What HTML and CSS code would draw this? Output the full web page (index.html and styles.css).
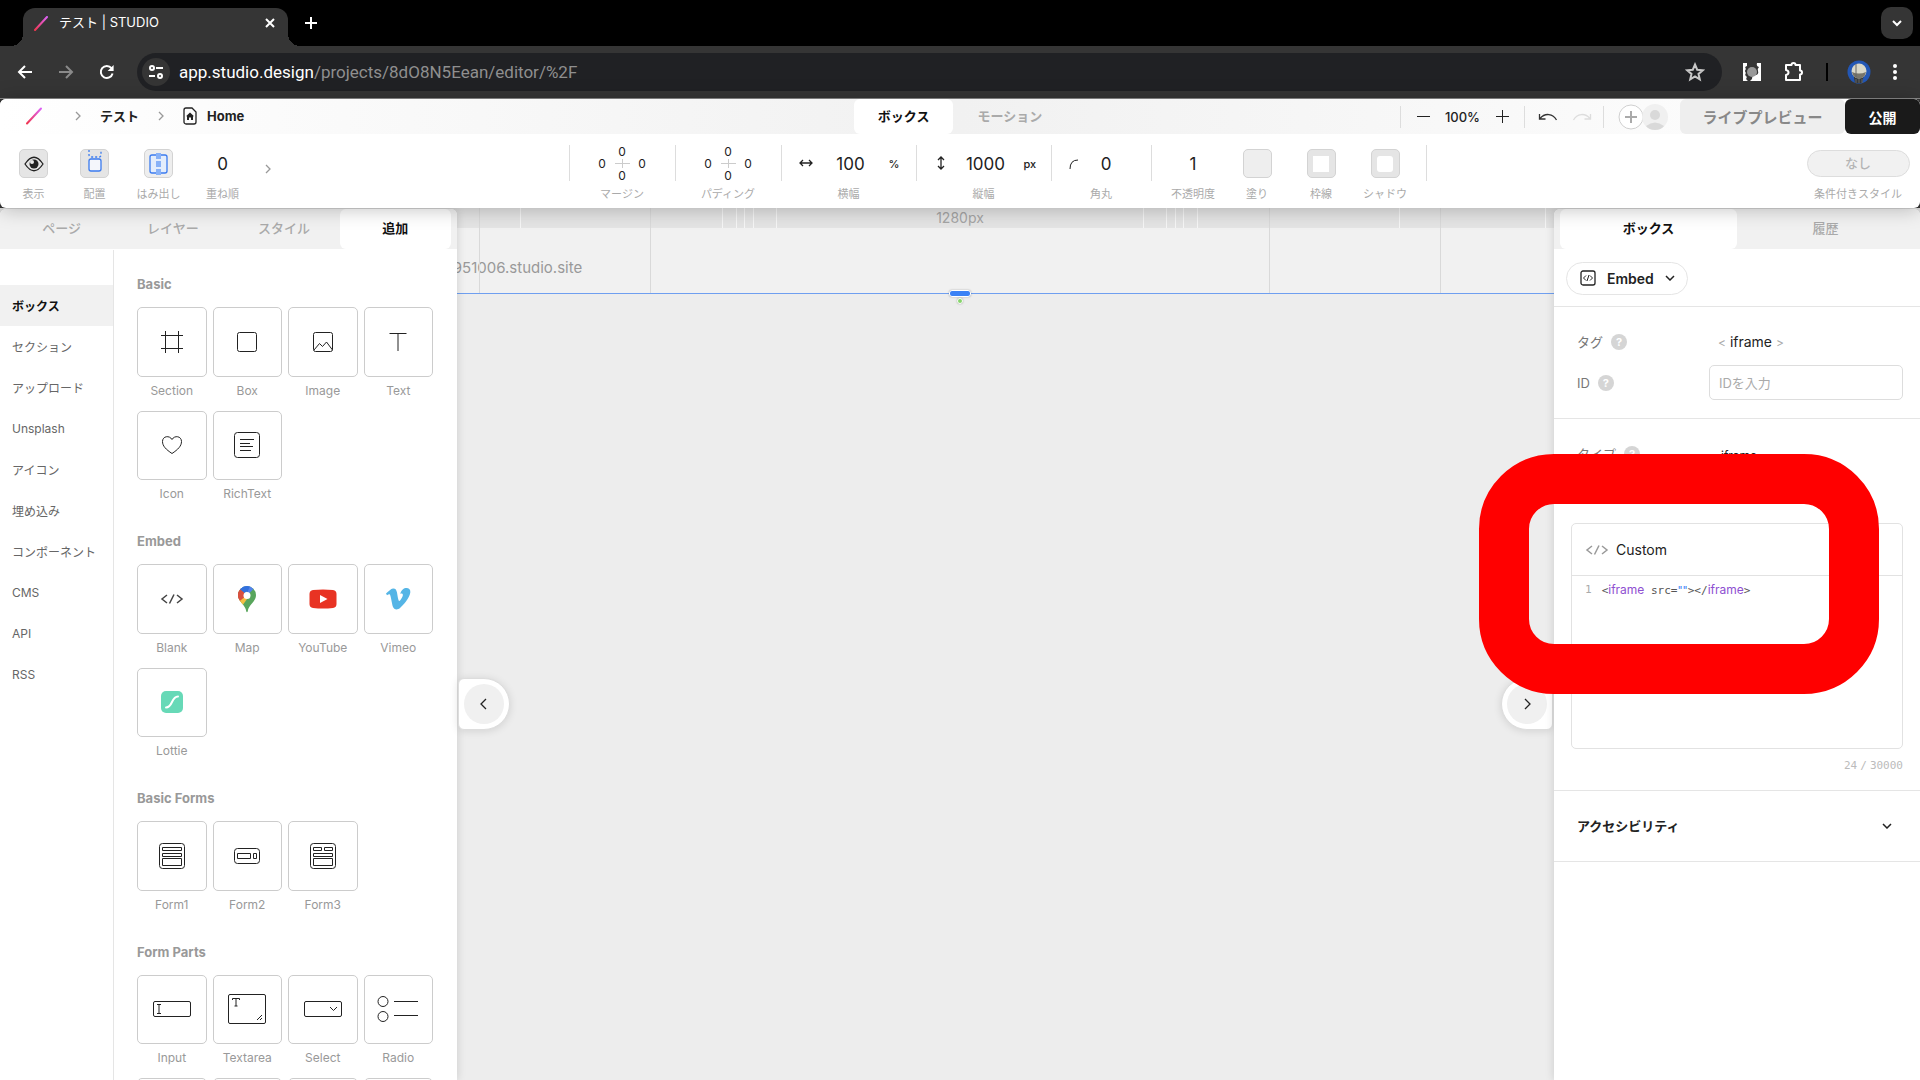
FILE: index.html
```html
<!DOCTYPE html>
<html lang="ja">

<head>
    <meta charset="UTF-8">
    <meta name="viewport" content="width=device-width, initial-scale=1.0">
    <title>テスト | STUDIO</title>
    <link rel="stylesheet" href="styles.css">
</head>

<body>
    <!-- browser -->
    <div class="tab-bar">
        <div class="browser-tab">
            <svg width="16" height="16" viewBox="0 0 16 16"><path d="M2 15 14 2" stroke="url(#slash)" stroke-width="2" stroke-linecap="round"/></svg>
            <span class="browser-title">テスト | STUDIO</span>
            <button class="chrome-btn" aria-label="閉じる"><svg width="12" height="12" viewBox="0 0 12 12"><path d="M2 2l8 8M10 2l-8 8" stroke="#fff" stroke-width="2"/></svg></button>
        </div>
        <button class="chrome-btn" aria-label="新しいタブ"><svg width="14" height="14" viewBox="0 0 14 14"><path d="M7 1v12M1 7h12" stroke="#fff" stroke-width="2"/></svg></button>
        <button class="tab-search" aria-label="タブを検索"><svg width="12" height="12" viewBox="0 0 12 12"><path d="M2 4l4 4 4-4" fill="none" stroke="#fff" stroke-width="2"/></svg></button>
    </div>
    <div class="address-row">
        <button class="chrome-btn" aria-label="戻る"><svg width="16" height="16" viewBox="0 0 16 16"><path d="M15 8H2M8 2 2 8l6 6" fill="none" stroke="#fff" stroke-width="2"/></svg></button>
        <button class="chrome-btn" aria-label="進む"><svg width="16" height="16" viewBox="0 0 16 16"><path d="M1 8h13M8 2l6 6-6 6" fill="none" stroke="#8a8a8a" stroke-width="2"/></svg></button>
        <button class="chrome-btn" aria-label="再読み込み"><svg width="16" height="16" viewBox="0 0 16 16"><path d="M13.600 9.500A6 6 0 1 1 12.500 4.200" fill="none" stroke="#fff" stroke-width="2"/><path d="M14.600 1v6h-6z" fill="#fff"/></svg></button>
        <div class="address">
            <button class="site-info" aria-label="サイト情報"><svg width="16" height="16" viewBox="0 0 16 16" fill="none" stroke="#fff" stroke-width="2"><circle cx="4" cy="4" r="2"/><path d="M8 4h7M1 12h6"/><circle cx="12" cy="12" r="2"/></svg></button>
            <span class="url"><span class="host">app.studio.design</span>/projects/8dO8N5Eean/editor/%2F</span>
            <button class="chrome-btn" aria-label="ブックマーク"><svg width="20" height="20" viewBox="0 0 20 20"><path d="M10 2.500l2.200 5.200 5.600.5-4.300 3.700 1.300 5.500L10 14.500l-4.800 2.900 1.300-5.500L2.200 8.200l5.600-.5z" fill="none" stroke="#c7c7c7" stroke-width="2"/></svg></button>
        </div>
        <div class="extensions">
            <button class="chrome-btn" aria-label="拡張機能"><svg width="20" height="20" viewBox="0 0 20 20"><path d="M1 1h18v18H1z" fill="#fff"/><path d="M5 1h10q-1 3 2 4-2 2-1 4 1 3-2 4-4 0-4 4l-2 2H6q-3-2-1-4-3-2-1-4-2-2 0-4-2-2 1-3z" fill="#353535"/><circle cx="10" cy="10" r="5" fill="#999"/></svg></button>
            <button class="chrome-btn" aria-label="拡張機能の管理"><svg width="20" height="20" viewBox="0 0 20 20"><path d="M2 3h5.500a2 2 0 0 1 4 0H16v5.500a2 2 0 0 1 0 4V18H2v-5q2.500-.5 2.500-2.500T2 8z" fill="none" stroke="#fff" stroke-width="2" stroke-linejoin="round"/></svg></button>
            <span class="chrome-line"></span>
            <button class="chrome-btn" aria-label="プロフィール"><svg width="24" height="24" viewBox="0 0 24 24"><circle cx="12" cy="12" r="11.500" fill="#2357b5"/><path d="M7 14h10l-1 5-1 4H8l-1-5z" fill="#363a3b"/><circle cx="12" cy="11" r="7.500" fill="#d9d8ca"/><path d="M5 12q7 3 14 0-1 6-7 6.500-6-.5-7-6.500z" fill="#77756b"/><path d="M9 4v13M9 19v4M12 19v4M15 19v4" stroke="#666" stroke-width="1"/></svg></button>
            <button class="chrome-btn" aria-label="メニュー"><svg width="4" height="16" viewBox="0 0 4 16" fill="#fff"><circle cx="2" cy="2" r="2"/><circle cx="2" cy="8" r="2"/><circle cx="2" cy="14" r="2"/></svg></button>
        </div>
    </div>

    <!-- header -->
    <header class="header">
        <div class="header-top">
            <nav class="crumbs">
                <a class="logo" href="#" aria-label="STUDIO"><svg width="18" height="18" viewBox="0 0 18 18"><defs><linearGradient id="slash" x1="0" y1="1" x2="1" y2="0"><stop offset="0" stop-color="#f0364f"/><stop offset="1" stop-color="#dc62f5"/></linearGradient></defs><path d="M2 16.500 16 1.500" stroke="url(#slash)" stroke-width="2" stroke-linecap="round"/></svg></a>
                <svg width="6" height="10" viewBox="0 0 6 10"><path d="M1 1l4 4-4 4" fill="none" stroke="#999" stroke-width="1.300"/></svg>
                <a href="#">テスト</a>
                <svg width="6" height="10" viewBox="0 0 6 10"><path d="M1 1l4 4-4 4" fill="none" stroke="#999" stroke-width="1.300"/></svg>
                <a class="crumb-page" href="#"><svg width="14" height="18" viewBox="0 0 14 18"><path d="M3 1h6l4 4v10a2 2 0 0 1-2 2H3a2 2 0 0 1-2-2V3a2 2 0 0 1 2-2z" fill="none" stroke="#222" stroke-width="1.300"/><path d="M7 5.500l4 3.800h-1V13H8v-2.500H6V13H4V9.300H3z" fill="#222"/></svg>Home</a>
            </nav>
            <div class="mode-tabs">
                <button class="mode-tab active">ボックス</button>
                <button class="mode-tab">モーション</button>
            </div>
            <div class="header-actions">
                <div class="action-group">
                    <button aria-label="縮小"><svg width="14" height="14" viewBox="0 0 14 14"><path d="M1 6.500h13" stroke="#222"/></svg></button>
                    <span class="zoom">100%</span>
                    <button aria-label="拡大"><svg width="14" height="14" viewBox="0 0 14 14"><path d="M1 6.500h13M7.500 0v13" stroke="#222"/></svg></button>
                </div>
                <div class="action-group">
                    <button aria-label="元に戻す"><svg width="20" height="10" viewBox="0 0 20 10"><path d="M18.500 8C15 1.500 7 .5 2 6.500M1.500 2v5h6" fill="none" stroke="#333" stroke-width="1.300"/></svg></button>
                    <button aria-label="やり直す"><svg width="20" height="10" viewBox="0 0 20 10"><path d="M1.500 8C5 1.500 13 .5 18 6.500M18.500 2v5h-6" fill="none" stroke="#ddd" stroke-width="1.300"/></svg></button>
                </div>
                <div class="action-group members">
                    <button aria-label="メンバーを招待"><svg width="26" height="26" viewBox="0 0 26 26"><circle cx="13" cy="13" r="12" fill="#fff" stroke="#d0d0d0"/><path d="M13 7v12M7 13h12" stroke="#aaa" stroke-width="2"/></svg></button>
                    <button aria-label="アカウント"><svg width="26" height="26" viewBox="0 0 26 26"><circle cx="13" cy="13" r="13" fill="#f0f0f0"/><circle cx="13" cy="11" r="5" fill="#d9d9d9"/><path d="M4 22q9-7 18 0-3 4-9 4t-9-4z" fill="#d9d9d9"/></svg></button>
                </div>
                <button class="preview">ライブプレビュー</button>
                <button class="publish">公開</button>
            </div>
        </div>

        <div class="style-bar">
            <div class="style-left">
                <div class="prop"><button class="tile" id="show"><svg width="22" height="16" viewBox="0 0 22 16"><path d="M2 8q9-13.500 18 0-9 13.500-18 0z" fill="none" stroke="#222" stroke-width="1.300"/><circle cx="11" cy="8" r="4.500" fill="#222"/><circle cx="9" cy="6" r="2" fill="#e8e8e8"/></svg></button><label for="show">表示</label></div>
                <div class="prop"><button class="tile" id="place"><svg width="28" height="28" viewBox="0 0 28 28" fill="none" stroke="#3b7bef" stroke-width="1.300"><path d="M8 0v5a2 2 0 0 0 2 2h8a2 2 0 0 0 2-2V0" stroke-dasharray="2 2"/><rect x="8" y="9" width="12" height="12" rx="2" fill="#f4f6fb"/></svg></button><label for="place">配置</label></div>
                <div class="prop"><button class="tile light" id="overflow"><svg width="28" height="28" viewBox="0 0 28 28"><rect x="5" y="5" width="17" height="18" rx="2" fill="#e3edfc" stroke="#3b7bef" stroke-width="1.300"/><path d="M11 3h5v6h-5zM11 11h5v6h-5zM11 19h5v6h-5z" fill="#87b1f7"/></svg></button><label for="overflow">はみ出し</label></div>
                <div class="prop"><input class="value" id="order" value="0"><label for="order">重ね順</label></div>
                <button class="more" aria-label="その他"><svg width="6" height="10" viewBox="0 0 6 10"><path d="M1 1l4 4-4 4" fill="none" stroke="#999" stroke-width="1.300"/></svg></button>
            </div>
            <div class="style-center">
                <fieldset class="prop spacing">
                    <div class="edges">
                        <input class="top" aria-label="マージン上" value="0">
                        <input class="left" aria-label="マージン左" value="0">
                        <svg width="15" height="9" viewBox="0 0 15 9"><path d="M0 4.500h15M7.500 0v9" stroke="#ccc"/></svg>
                        <input class="right" aria-label="マージン右" value="0">
                        <input class="bottom" aria-label="マージン下" value="0">
                    </div>
                    <span>マージン</span>
                </fieldset>
                <fieldset class="prop spacing">
                    <div class="edges">
                        <input class="top" aria-label="パディング上" value="0">
                        <input class="left" aria-label="パディング左" value="0">
                        <svg width="15" height="9" viewBox="0 0 15 9"><path d="M0 4.500h15M7.500 0v9" stroke="#ccc"/></svg>
                        <input class="right" aria-label="パディング右" value="0">
                        <input class="bottom" aria-label="パディング下" value="0">
                    </div>
                    <span>パディング</span>
                </fieldset>
                <div class="prop size">
                    <div class="size-row"><svg width="14" height="12" viewBox="0 0 14 12"><path d="M1 5h12M4 2 1 5l3 3M10 2l3 3-3 3" fill="none" stroke="#222" stroke-width="1.300"/></svg><input class="value" id="w" value="100"><button class="unit">%</button></div>
                    <label for="w">横幅</label>
                </div>
                <div class="prop size">
                    <div class="size-row"><svg width="14" height="16" viewBox="0 0 14 16"><path d="M7 1v12M4 4l3-3 3 3M4 10l3 3 3-3" fill="none" stroke="#222" stroke-width="1.300"/></svg><input class="value" id="h" value="1000"><button class="unit">px</button></div>
                    <label for="h">縦幅</label>
                </div>
                <div class="prop radius">
                    <div class="size-row"><svg width="10" height="10" viewBox="0 0 10 10"><path d="M1 10Q1 1 9 1" fill="none" stroke="#222"/></svg><input class="value" id="r" value="0"></div>
                    <label for="r">角丸</label>
                </div>
                <div class="looks">
                    <div class="prop"><input class="value" id="alpha" value="1"><label for="alpha">不透明度</label></div>
                    <div class="prop"><button class="tile fill" id="fill"></button><label for="fill">塗り</label></div>
                    <div class="prop"><button class="tile" id="line"><span class="hole"></span></button><label for="line">枠線</label></div>
                    <div class="prop"><button class="tile" id="shadow"><span class="hole soft"></span></button><label for="shadow">シャドウ</label></div>
                </div>
            </div>
            <div class="style-right">
                <div class="prop"><button class="none" id="cond">なし</button><label for="cond">条件付きスタイル</label></div>
            </div>
        </div>
    </header>

    <!-- workspace -->
    <main class="workspace">
        <section class="canvas">
            <div class="ruler">1280px</div>
            <div class="site-url">hello-951006.studio.site</div>
            <svg class="guides" width="1920" height="85" viewBox="0 0 1920 85">
                <path d="M479.500 0v85M650.500 0v85M1269.500 0v85M1440.500 0v85" stroke="#d9d9d9"/>
                <path d="M520.500 0v20M722.500 0v20M736.500 0v20M744.500 0v20M753.500 0v20M776.500 0v20M1143.500 0v20M1166.500 0v20M1175.500 0v20M1183.500 0v20M1197.500 0v20M1399.500 0v20M1545.500 0v20" stroke="#f6f6f6"/>
            </svg>
            <span class="grip"></span>
            <span class="dot"></span>
        </section>

        <aside class="left-panel">
            <div class="panel-tabs">
                <button class="panel-tab">ページ</button>
                <button class="panel-tab">レイヤー</button>
                <button class="panel-tab">スタイル</button>
                <button class="panel-tab active">追加</button>
            </div>
            <div class="left-body">
                <nav class="side-nav">
                    <button class="active">ボックス</button>
                    <button>セクション</button>
                    <button>アップロード</button>
                    <button>Unsplash</button>
                    <button>アイコン</button>
                    <button>埋め込み</button>
                    <button>コンポーネント</button>
                    <button>CMS</button>
                    <button>API</button>
                    <button>RSS</button>
                </nav>
                <div class="parts">
                    <h2>Basic</h2>
                    <div class="grid">
                        <button class="part"><span class="card"><svg width="22" height="22" viewBox="0 0 22 22"><path d="M4.500 0v22M17.500 0v22M0 4.500h22M0 17.500h22"/></svg></span>Section</button>
                        <button class="part"><span class="card"><svg width="22" height="22" viewBox="0 0 22 22"><rect x="1.500" y="1.500" width="19" height="19" rx="2"/></svg></span>Box</button>
                        <button class="part"><span class="card"><svg width="22" height="22" viewBox="0 0 22 22"><rect x="1.500" y="1.500" width="19" height="19" rx="2"/><path d="M2 19l5.500-6.500 3 3 4-4.500 6 8"/></svg></span>Image</button>
                        <button class="part"><span class="card"><svg width="22" height="22" viewBox="0 0 22 22"><path d="M2.500 2.500h17M11 2.500V20"/></svg></span>Text</button>
                        <button class="part"><span class="card"><svg width="22" height="22" viewBox="0 0 22 22"><path d="M11 19.500C5 15.500 1.500 12 1.500 7.500c0-5.500 7-6.500 9.500-2 2.500-4.500 9.500-3.500 9.500 2 0 4.500-3.500 8-9.500 12z"/></svg></span>Icon</button>
                        <button class="part"><span class="card"><svg width="28" height="28" viewBox="0 0 28 28"><rect x="1.500" y="1.500" width="25" height="25" rx="3"/><path d="M7 8.500h14M7 12.500h10M7 15.500h13M7 19.500h11"/></svg></span>RichText</button>
                    </div>
                    <h2>Embed</h2>
                    <div class="grid">
                        <button class="part"><span class="card"><svg width="24" height="12" viewBox="0 0 24 12"><path d="M7 2 2 6l5 4M14 1.500l-4.500 9M17 2l5 4-5 4" stroke="#444" stroke-width="1.500"/></svg></span>Blank</button>
                        <button class="part"><span class="card"><svg class="solid" width="20" height="28" viewBox="0 0 20 28"><clipPath id="pin"><path d="M10 1a9 9 0 0 1 9 9c0 7-7.500 9.500-8.300 16.500q-.7 1.500-1.400 0C8.500 19.500 1 17 1 10a9 9 0 0 1 9-9z"/></clipPath><g clip-path="url(#pin)"><path d="M0 0h20v28H0z" fill="#58a55c"/><path d="M0 0h16.500v4L10 10.500z" fill="#5383ec"/><path d="M0 0h13.500L9 10.500 2.800 4.500z" fill="#3271de"/><path d="M0 1.500 9 9.500.500 17z" fill="#d9503f"/><path d="M1.500 15.500 9.500 6.500l2 5.500-6.500 9z" fill="#f5bf42"/><path d="M2.800 4.500 9 9.500l-2 3-6 5-1-8z" fill="#d9503f"/></g><circle cx="10" cy="10.500" r="3.500" fill="#fff"/></svg></span>Map</button>
                        <button class="part"><span class="card"><svg class="solid" width="28" height="20" viewBox="0 0 28 20"><path d="M4 1q10-1 20 0 3.500.5 3.500 4v10q0 3.500-3.500 4-10 1-20 0-3.500-.5-3.500-4V5Q.5 1.500 4 1z" fill="#e83323"/><path d="M11 6l7.500 4-7.500 4z" fill="#fff"/></svg></span>YouTube</button>
                        <button class="part"><span class="card"><svg class="solid" width="26" height="24" viewBox="0 0 26 24"><path d="M1 6.500C3 4.700 6 1.700 8 1.500c2.500-.2 3.500 1.500 4 4 .7 4 1.300 8.500 2.300 8.500 1 0 4-5 3.500-6.500-.3-1.200-1.500-1-2.600-.6C16.500 2.500 19 .8 22 1c2.500.2 3.600 2 3.300 4.500C24.500 11 18 18.500 15 21c-3 2.500-6 1.500-7.200-1.500C7 17 5.800 8 4.600 7.300c-.6-.3-1.500.3-2.600 1z" fill="#55b5e6"/></svg></span>Vimeo</button>
                        <button class="part"><span class="card"><svg width="22" height="22" viewBox="0 0 22 22"><rect width="22" height="22" rx="5" fill="#67d9b7" stroke="none"/><path d="M5 16.500c7 0 5-11 12-11" stroke="#fff" stroke-width="2" stroke-linecap="round"/></svg></span>Lottie</button>
                    </div>
                    <h2>Basic Forms</h2>
                    <div class="grid">
                        <button class="part"><span class="card"><svg width="28" height="28" viewBox="0 0 28 28"><rect x="1.500" y="1.500" width="25" height="25" rx="3"/><path d="M4.500 5.500h19v3h-19zM4.500 11.500h19v3h-19zM4.500 16.500h19v7h-19z"/></svg></span>Form1</button>
                        <button class="part"><span class="card"><svg width="28" height="18" viewBox="0 0 28 18"><rect x="1.500" y="1.500" width="25" height="15" rx="3"/><path d="M4.500 6.500h13v5h-13zM20.500 6.500h3v5h-3z"/></svg></span>Form2</button>
                        <button class="part"><span class="card"><svg width="28" height="28" viewBox="0 0 28 28"><rect x="1.500" y="1.500" width="25" height="25" rx="3"/><path d="M4.500 5.500h8v3h-8zM15.500 5.500h8v3h-8zM4.500 11.500h19v3h-19zM4.500 16.500h19v7h-19z"/></svg></span>Form3</button>
                    </div>
                    <h2>Form Parts</h2>
                    <div class="grid">
                        <button class="part"><span class="card"><svg width="40" height="18" viewBox="0 0 40 18"><rect x="1.500" y="1.500" width="37" height="15" rx="1.500"/><path d="M5 4.500h4M7 4.500v9M5 13.500h4"/></svg></span>Input</button>
                        <button class="part"><span class="card"><svg width="40" height="32" viewBox="0 0 40 32"><rect x="1.500" y="1.500" width="37" height="29" rx="1.500"/><path d="M5.500 7V5.500h7V7M9 5.500V13M7.500 13h3M30 27l5-5M33 27l2-2"/></svg></span>Textarea</button>
                        <button class="part"><span class="card"><svg width="40" height="18" viewBox="0 0 40 18"><rect x="1.500" y="1.500" width="37" height="15" rx="1.500"/><path d="M27 7l3.500 3.500L34 7"/></svg></span>Select</button>
                        <button class="part"><span class="card"><svg width="42" height="28" viewBox="0 0 42 28"><circle cx="6" cy="6.500" r="5"/><circle cx="6" cy="21.500" r="5"/><path d="M17 6.500h24M17 20.500h24"/></svg></span>Radio</button>
                        <button class="part" aria-label="Checkbox"><span class="card"></span></button>
                        <button class="part" aria-label="Password"><span class="card"></span></button>
                        <button class="part" aria-label="File"><span class="card"></span></button>
                        <button class="part" aria-label="Submit"><span class="card"></span></button>
                    </div>
                </div>
            </div>
        </aside>

        <div class="handles">
            <button class="handle handle-left" aria-label="左パネルを閉じる"><span><svg width="8" height="12" viewBox="0 0 8 12"><path d="M6 1 1 6l5 5" fill="none" stroke="#222" stroke-width="1.300"/></svg></span></button>
            <button class="handle handle-right" aria-label="右パネルを閉じる"><span><svg width="8" height="12" viewBox="0 0 8 12"><path d="M2 1l5 5-5 5" fill="none" stroke="#222" stroke-width="1.300"/></svg></span></button>
        </div>

        <aside class="right-panel">
            <div class="panel-tabs">
                <button class="panel-tab active">ボックス</button>
                <button class="panel-tab">履歴</button>
            </div>
            <div class="element">
                <button class="element-type"><svg width="16" height="16" viewBox="0 0 16 16" fill="none" stroke="#222"><rect x="1" y="1" width="14" height="14" rx="2" stroke-width="1.300"/><path d="M6 5.500 3.500 8 6 10.500M10 5.500 12.500 8 10 10.500M9 5l-2 6"/></svg>Embed<svg width="10" height="6" viewBox="0 0 10 6"><path d="M1 1l4 4 4-4" fill="none" stroke="#222" stroke-width="1.500"/></svg></button>
            </div>
            <div class="fields">
                <div class="field"><span class="name">タグ<i class="help">?</i></span><span class="tag"><em>&lt;</em> iframe <em>&gt;</em></span></div>
                <div class="field"><label class="name" for="box-id">ID<i class="help">?</i></label><input class="text-input" id="box-id" placeholder="IDを入力"></div>
            </div>
            <div class="fields embed">
                <div class="field"><span class="name">タイプ<i class="help">?</i></span><span class="type">iframe</span></div>
                <div class="field"><span class="name">埋め込みコード<i class="help">?</i></span></div>
                <div class="editor">
                    <div class="editor-head"><svg width="24" height="12" viewBox="0 0 24 12"><path d="M7 2 2 6l5 4M14 1.500l-4.500 9M17 2l5 4-5 4" fill="none" stroke="#999" stroke-width="1.500"/></svg>Custom</div>
                    <pre class="code"><span class="num">1</span><code>&lt;<b>iframe</b> src=<q>""</q>&gt;&lt;/<b>iframe</b>&gt;</code></pre>
                </div>
                <div class="count"><span>24</span><span>/</span><span>30000</span></div>
            </div>
            <button class="accordion">アクセシビリティ<svg width="10" height="6" viewBox="0 0 10 6"><path d="M1 1l4 4 4-4" fill="none" stroke="#222" stroke-width="1.500"/></svg></button>
        </aside>
    </main>

    <div class="marker"></div>
</body>

</html>
```
FILE: styles.css
```css
* {
    margin: 0;
    padding: 0;
    box-sizing: border-box;
}

body {
    position: relative;
    display: flex;
    flex-direction: column;
    height: 100vh;
    overflow: hidden;
    background-color: #353535;
    color: #222;
    font-family: Inter, "Noto Sans CJK JP", sans-serif;
    font-size: 13px;
}

button,
input {
    border: none;
    background: none;
    color: inherit;
    font: inherit;
}

button {
    cursor: pointer;
}

svg {
    display: block;
    flex-shrink: 0;
}

a {
    color: inherit;
    text-decoration: none;
}

/* browser */
.tab-bar {
    display: flex;
    align-items: center;
    gap: 16px;
    height: 46px;
    padding: 0 7px 0 23px;
    background-color: #000;
}

.browser-tab {
    position: relative;
    display: flex;
    align-items: center;
    align-self: flex-end;
    gap: 10px;
    width: 265px;
    height: 38px;
    padding: 0 12px 8px 10px;
    border-radius: 12px 12px 0 0;
    background-color: #353535;
    color: #fff;
}

.browser-tab::before,
.browser-tab::after {
    content: "";
    position: absolute;
    bottom: 0;
    left: -12px;
    width: 12px;
    height: 12px;
    background: radial-gradient(circle at 0 0, #000 12px, #353535 12px);
}

.browser-tab::after {
    left: auto;
    right: -12px;
    background: radial-gradient(circle at 100% 0, #000 12px, #353535 12px);
}

.browser-title {
    flex: 1;
    padding-bottom: 3px;
}

.tab-search {
    display: flex;
    align-items: center;
    justify-content: center;
    width: 32px;
    height: 32px;
    margin-left: auto;
    border-radius: 10px;
    background-color: #353535;
}

.address-row {
    display: flex;
    align-items: center;
    gap: 25px;
    height: 53px;
    padding: 0 23px 0 17px;
    border-bottom: 1px solid #8a8a8a;
    background-color: #353535;
}

.address {
    display: flex;
    flex: 1;
    align-items: center;
    gap: 9px;
    height: 38px;
    margin: 0 -5px 0 -3px;
    padding: 0 17px 0 5px;
    border-radius: 19px;
    background-color: #202124;
}

.site-info {
    display: flex;
    align-items: center;
    justify-content: center;
    width: 28px;
    height: 28px;
    border-radius: 50%;
    background-color: #353535;
}

.url {
    flex: 1;
    color: #8f8f8f;
    font-family: Roboto, sans-serif;
    font-size: 17px;
}

.host {
    color: #fff;
}

.extensions {
    display: flex;
    align-items: center;
    gap: 22px;
}

.chrome-line {
    width: 2px;
    height: 18px;
    margin-right: -3px;
    background-color: #000;
}

/* header */
.header {
    position: relative;
    z-index: 3;
    border-radius: 6px;
    background-color: #fff;
    box-shadow: 0 1px 20px rgba(0, 0, 0, 0.25);
}

.header-top {
    display: grid;
    grid-template-columns: 1fr auto 1fr;
    height: 35px;
    border-radius: 6px 6px 0 0;
    background: linear-gradient(90deg, #fff, #f1f1f1 50%, #fff);
}

.crumbs {
    display: flex;
    align-items: center;
    gap: 19px;
    padding: 0 0 2px 25px;
    font-size: 13px;
    font-weight: 700;
}

.logo {
    margin-right: 13px;
}

.crumb-page {
    display: flex;
    align-items: center;
    gap: 10px;
}

.mode-tabs {
    display: flex;
}

.mode-tab {
    padding: 0 24px 2px;
    border-radius: 6px;
    color: #aaa;
    font-weight: 700;
}

.mode-tab.active {
    background-color: #fff;
    color: #111;
}

.header-actions {
    display: flex;
    align-items: center;
    justify-content: flex-end;
}

.action-group {
    display: flex;
    align-items: center;
    gap: 15px;
    padding: 0 15px;
    height: 22px;
    border-left: 1px solid #ddd;
    font-weight: 500;
}

.action-group:nth-child(2) {
    gap: 14px;
    padding: 0 11px 0 13px;
}

.members {
    gap: 0;
    padding: 0 12px 0 14px;
}

.members button + button {
    margin-left: -2px;
}

.preview,
.publish {
    height: 35px;
    border-radius: 6px;
    font-size: 14px;
    font-weight: 700;
}

.preview {
    width: 165px;
    background-color: #eee;
    color: #888;
    font-size: 15px;
}

.publish {
    width: 75px;
    background-color: #1a1a1a;
    color: #fff;
}

.style-bar {
    display: flex;
    height: 74px;
    padding-top: 11px;
}

.prop {
    display: flex;
    flex-direction: column;
    align-items: center;
    width: 64px;
    border: none;
    white-space: nowrap;
}

.prop > :first-child {
    margin: 4px 0;
}

.prop label,
.prop > span {
    color: #aaa;
    font-size: 11px;
    line-height: 24px;
}

.tile {
    display: flex;
    align-items: center;
    justify-content: center;
    width: 29px;
    height: 29px;
    border: 1px solid #d3d3d3;
    border-radius: 5px;
    background-color: #e5e5e5;
}

.tile.light,
.tile.fill {
    background-color: #eee;
}

.hole {
    width: 16px;
    height: 16px;
    background-color: #fff;
}

.hole.soft {
    border-radius: 3px;
}

.value {
    width: 48px;
    height: 29px;
    font-size: 17px;
    text-align: center;
}

.style-left {
    display: flex;
    flex: 1;
}

.style-left .prop:nth-child(1) {
    width: 67px;
}

.style-left .prop:nth-child(2) {
    width: 55px;
}

.style-left .prop:nth-child(3) {
    width: 73px;
}

.style-left .prop:nth-child(4) {
    width: 55px;
}

.more {
    width: 36px;
    height: 48px;
}

.more svg {
    margin: 0 auto;
}

.style-center {
    display: flex;
    margin-left: 86px;
}

.style-center > * {
    background: linear-gradient(#ddd, #ddd) left top / 1px 36px no-repeat;
}

.spacing {
    width: 106px;
}

.prop > .edges {
    display: grid;
    grid-template: repeat(3, 12px) / repeat(3, 20px);
    grid-template-areas: ". top ." "left mid right" ". bottom .";
    place-items: center;
    margin: 0 0 1px;
}

.edges svg {
    grid-area: mid;
}

.edges input {
    width: 20px;
    height: 12px;
    font-size: 12px;
    line-height: 12px;
    text-align: center;
}

.edges .top {
    grid-area: top;
}

.edges .left {
    grid-area: left;
}

.edges .right {
    grid-area: right;
}

.edges .bottom {
    grid-area: bottom;
}

.size {
    width: 135px;
}

.size-row {
    display: flex;
    align-items: center;
    gap: 14px;
    width: 100px;
}

.unit {
    width: 16px;
    font-size: 11px;
    font-weight: 500;
}

.radius {
    width: 100px;
}

.radius .size-row {
    gap: 9px;
    width: 64px;
}

.radius .size-row .value {
    width: 36px;
}

.looks {
    display: flex;
    padding: 0 10px;
    background-image: linear-gradient(#ddd, #ddd), linear-gradient(#ddd, #ddd);
    background-position: left top, right top;
}

.style-right {
    display: flex;
    flex: 1;
    justify-content: flex-end;
    padding-right: 10px;
}

.style-right .prop {
    width: 104px;
}

.none {
    width: 103px;
    height: 27px;
    padding-bottom: 2px;
    border: 1px solid #ddd;
    border-radius: 14px;
    background-color: #f1f1f1;
    color: #b5b5b5;
    font-weight: 500;
}

.prop > .none {
    margin: 5px 0;
}

/* workspace */
.workspace {
    display: grid;
    flex: 1;
    grid-template-rows: minmax(0, 1fr);
    grid-template-columns: 457px 1fr 366px;
    min-height: 0;
    background-color: #ededed;
}

.canvas {
    position: relative;
    grid-area: 1 / 1 / 2 / 4;
    overflow: hidden;
    text-align: center;
}

.ruler {
    height: 20px;
    background-color: #e4e4e4;
    color: #a5a5a5;
    font-size: 14px;
    line-height: 20px;
}

.site-url {
    height: 66px;
    padding: 30px 0 0 412px;
    border-bottom: 1px solid #6f9ff0;
    background-color: #f1f1f1;
    color: #999;
    font-size: 15px;
    line-height: 20px;
    text-align: left;
}

.guides {
    position: absolute;
    top: 0;
    left: calc(50% - 960px);
}

.grip {
    position: absolute;
    top: 82px;
    left: calc(50% - 11px);
    width: 22px;
    height: 7px;
    border: 1px solid #fff;
    border-radius: 3px;
    background-color: #3b82f6;
    box-shadow: 0 0 2px rgba(0, 0, 0, 0.3);
}

.dot {
    position: absolute;
    top: 90px;
    left: calc(50% - 3px);
    width: 6px;
    height: 6px;
    border: 1px solid #fff;
    border-radius: 50%;
    background-color: #86d46b;
    box-shadow: 0 0 2px rgba(0, 0, 0, 0.3);
}

.left-panel,
.right-panel {
    z-index: 1;
    margin-top: 1px;
    border-radius: 6px 6px 0 0;
    background-color: #fff;
    box-shadow: 0 0 10px rgba(0, 0, 0, 0.15);
    overflow: hidden;
}

.left-panel {
    display: flex;
    flex-direction: column;
    grid-area: 1 / 1;
}

.panel-tabs {
    display: flex;
    flex-shrink: 0;
    height: 40px;
    padding: 0 6px;
    background-color: #f1f1f1;
}

.panel-tab {
    flex: 1;
    padding-bottom: 4px;
    border-radius: 6px;
    color: #aaa;
    font-weight: 500;
}

.panel-tab.active {
    background-color: #fff;
    color: #111;
    font-weight: 700;
}

.left-body {
    display: flex;
    flex: 1;
    min-height: 0;
}

.side-nav {
    display: flex;
    flex-direction: column;
    width: 114px;
    margin-top: 1px;
    padding-top: 35px;
    border-right: 1px solid #e5e5e5;
    color: #666;
    font-size: 12px;
}

.side-nav button {
    flex-shrink: 0;
    height: 41px;
    padding: 0 0 1px 12px;
    text-align: left;
    white-space: nowrap;
}

.side-nav .active {
    background-color: #f1f1f1;
    color: #111;
    font-weight: 700;
}

.parts {
    flex: 1;
    padding: 25px 24px 0 23px;
    overflow: hidden;
}

.parts h2 {
    margin-bottom: 13px;
    color: #999;
    font-size: 13px;
    font-weight: 700;
    line-height: 20px;
}

.grid {
    display: grid;
    grid-template-columns: repeat(4, 1fr);
    gap: 7px 6px;
    margin-bottom: 24px;
}

.part {
    color: #999;
    font-size: 12px;
    line-height: 27px;
}

.card {
    display: flex;
    align-items: center;
    justify-content: center;
    aspect-ratio: 1;
    border: 1px solid #ccc;
    border-radius: 5px;
}

.card svg {
    fill: none;
    stroke: #222;
}

.card .solid {
    stroke: none;
}

.handles {
    display: flex;
    grid-area: 1 / 2;
    align-items: flex-start;
    justify-content: space-between;
    padding: 470px 1px 0;
}

.handle {
    z-index: 1;
    display: flex;
    align-items: center;
    justify-content: center;
    width: 52px;
    height: 52px;
    border: 1px solid #ddd;
    border-radius: 6px 26px 26px 6px;
    background-color: #fff;
    box-shadow: 0 1px 8px rgba(0, 0, 0, 0.12);
}

.handle-right {
    border-radius: 26px 6px 6px 26px;
}

.handle span {
    display: flex;
    align-items: center;
    justify-content: center;
    width: 40px;
    height: 40px;
    border-radius: 50%;
    background-color: #f0f0f0;
}

/* right panel */
.right-panel {
    grid-area: 1 / 3;
}

.element {
    height: 58px;
    padding: 13px 12px;
    border-bottom: 1px solid #e5e5e5;
}

.element-type {
    display: flex;
    align-items: center;
    gap: 11px;
    height: 33px;
    padding: 0 12px 1px 13px;
    border: 1px solid #e5e5e5;
    border-radius: 17px;
    font-size: 14px;
    font-weight: 600;
}

.fields {
    padding: 14px 17px 15px;
    border-bottom: 1px solid #e5e5e5;
}

.field {
    display: flex;
    align-items: center;
    justify-content: space-between;
    height: 41px;
}

.name {
    display: flex;
    align-items: center;
    gap: 8px;
    padding-left: 6px;
    color: #777;
}

.help {
    width: 16px;
    height: 16px;
    border-radius: 50%;
    background-color: #d5d5d5;
    color: #fff;
    font-size: 11px;
    font-style: normal;
    font-weight: 700;
    line-height: 16px;
    text-align: center;
}

.tag,
.type,
.text-input {
    width: 194px;
    padding: 0 9px;
}

.tag {
    font-size: 14px;
}

.tag em {
    color: #aaa;
    font-size: 12px;
    font-style: normal;
}

.type {
    padding: 4px 12px 0;
    font-size: 12px;
}

.text-input {
    height: 35px;
    border: 1px solid #ddd;
    border-radius: 5px;
    font-size: 13px;
}

.text-input::placeholder {
    color: #aaa;
}

.editor {
    height: 226px;
    margin-top: 8px;
    border: 1px solid #e2e2e2;
    border-radius: 5px;
}

.editor-head {
    display: flex;
    align-items: center;
    gap: 7px;
    height: 52px;
    padding: 0 12px 0 13px;
    border-bottom: 1px solid #e2e2e2;
    font-size: 14px;
}

.code {
    display: flex;
    gap: 10px;
    padding: 6px 13px;
    color: #555;
    font-family: "DejaVu Sans Mono", monospace;
    font-size: 11px;
    line-height: 16px;
}

.code code {
    font-family: inherit;
}

.code b {
    color: #8e4fd1;
    font-family: Inter, sans-serif;
    font-size: 12px;
    font-weight: 400;
}

.code q {
    color: #3b82f6;
    font-family: Inter, sans-serif;
    quotes: none;
}

.num {
    color: #aaa;
}

.count {
    display: flex;
    justify-content: flex-end;
    gap: 3px;
    padding-top: 8px;
    color: #bbb;
    font-family: "DejaVu Sans Mono", monospace;
    font-size: 11px;
    line-height: 18px;
}

.accordion {
    display: flex;
    align-items: center;
    justify-content: space-between;
    width: 100%;
    height: 71px;
    padding: 0 28px 1px 23px;
    border-bottom: 1px solid #e5e5e5;
    font-weight: 700;
}

.marker {
    position: absolute;
    top: 454px;
    right: 41px;
    z-index: 5;
    width: 400px;
    height: 240px;
    border: 50px solid #f00;
    border-radius: 75px;
    pointer-events: none;
}
```
